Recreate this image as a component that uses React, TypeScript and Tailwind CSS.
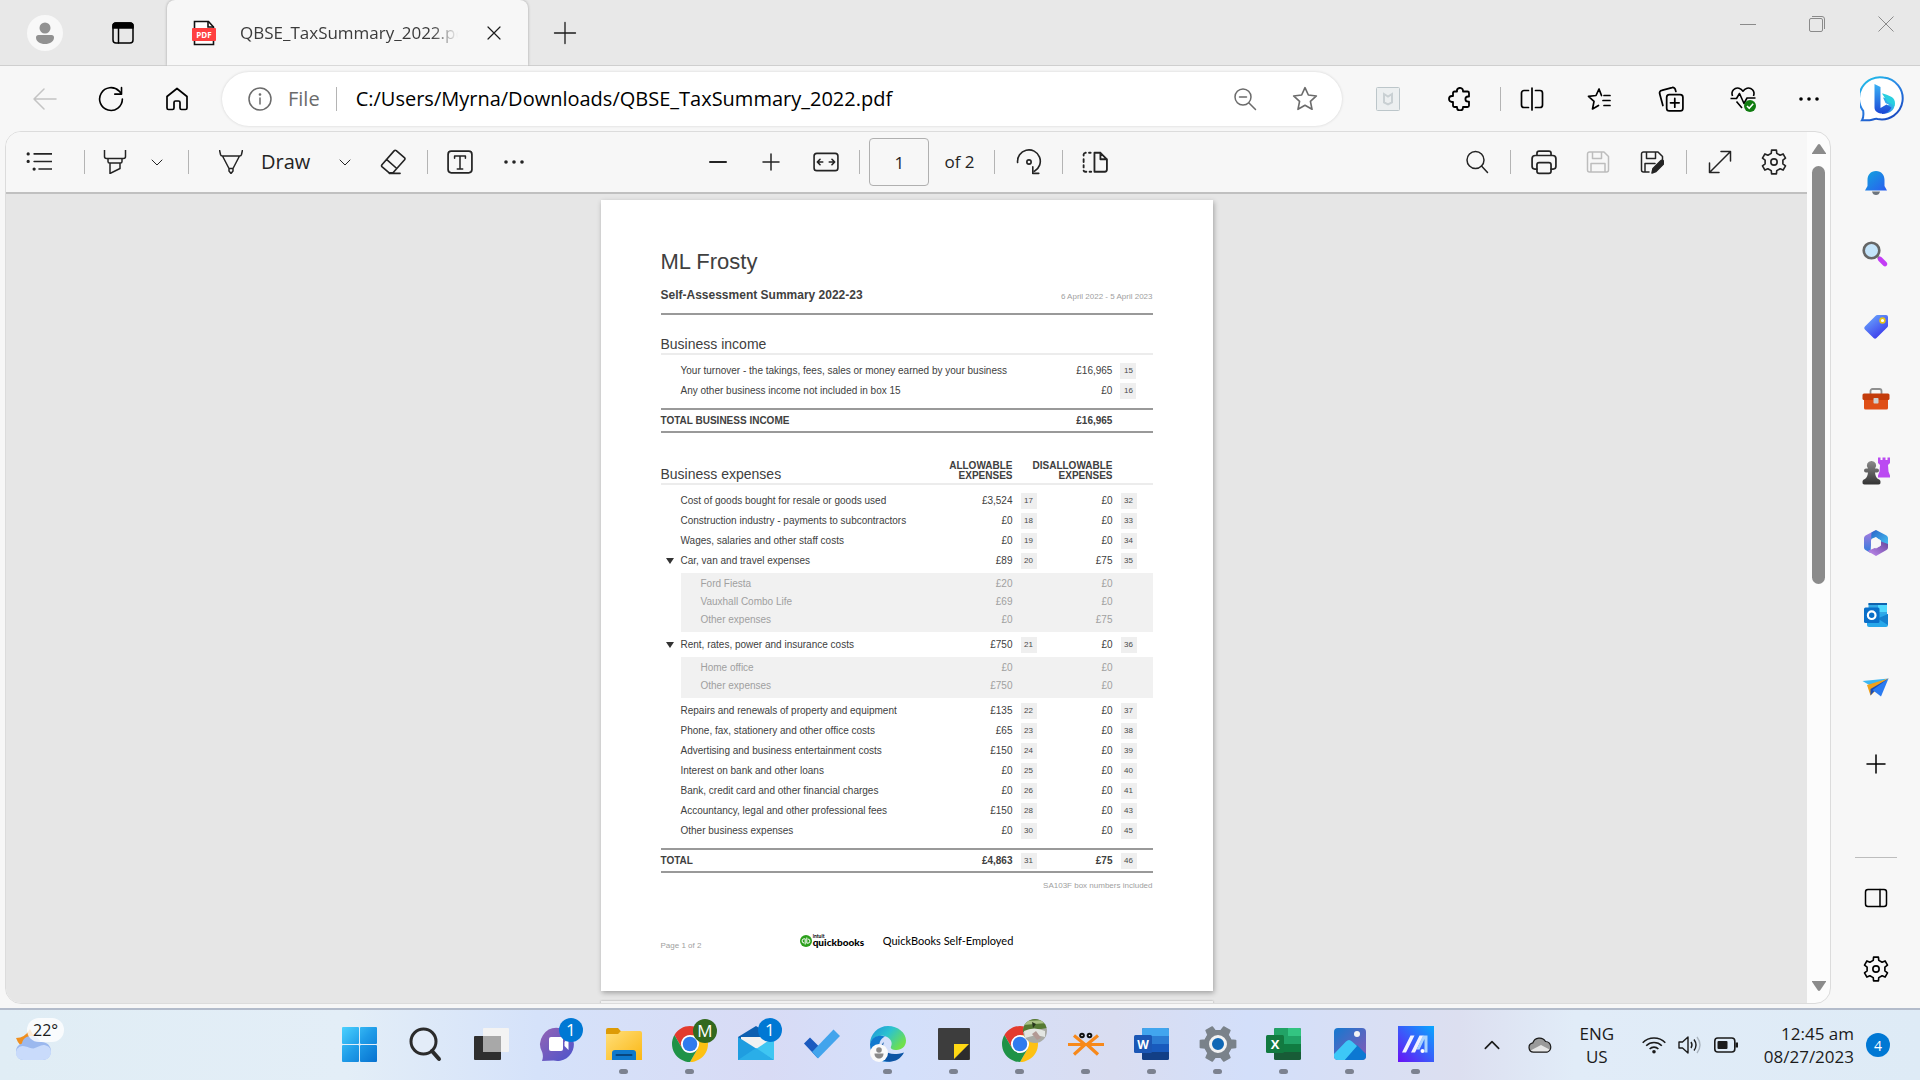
import type { ReactNode } from 'react';

type Row = {
  label: string;
  allow?: string;
  allowBox?: string;
  disallow: string;
  disallowBox?: string;
  children?: Row[];
};

const expenses: Row[] = [
  { label: 'Cost of goods bought for resale or goods used', allow: '£3,524', allowBox: '17', disallow: '£0', disallowBox: '32' },
  { label: 'Construction industry - payments to subcontractors', allow: '£0', allowBox: '18', disallow: '£0', disallowBox: '33' },
  { label: 'Wages, salaries and other staff costs', allow: '£0', allowBox: '19', disallow: '£0', disallowBox: '34' },
  {
    label: 'Car, van and travel expenses',
    allow: '£89',
    allowBox: '20',
    disallow: '£75',
    disallowBox: '35',
    children: [
      { label: 'Ford Fiesta', allow: '£20', disallow: '£0' },
      { label: 'Vauxhall Combo Life', allow: '£69', disallow: '£0' },
      { label: 'Other expenses', allow: '£0', disallow: '£75' },
    ],
  },
  {
    label: 'Rent, rates, power and insurance costs',
    allow: '£750',
    allowBox: '21',
    disallow: '£0',
    disallowBox: '36',
    children: [
      { label: 'Home office', allow: '£0', disallow: '£0' },
      { label: 'Other expenses', allow: '£750', disallow: '£0' },
    ],
  },
  { label: 'Repairs and renewals of property and equipment', allow: '£135', allowBox: '22', disallow: '£0', disallowBox: '37' },
  { label: 'Phone, fax, stationery and other office costs', allow: '£65', allowBox: '23', disallow: '£0', disallowBox: '38' },
  { label: 'Advertising and business entertainment costs', allow: '£150', allowBox: '24', disallow: '£0', disallowBox: '39' },
  { label: 'Interest on bank and other loans', allow: '£0', allowBox: '25', disallow: '£0', disallowBox: '40' },
  { label: 'Bank, credit card and other financial charges', allow: '£0', allowBox: '26', disallow: '£0', disallowBox: '41' },
  { label: 'Accountancy, legal and other professional fees', allow: '£150', allowBox: '28', disallow: '£0', disallowBox: '43' },
  { label: 'Other business expenses', allow: '£0', allowBox: '30', disallow: '£0', disallowBox: '45' },
];

const income: Row[] = [
  { label: 'Your turnover - the takings, fees, sales or money earned by your business', disallow: '£16,965', disallowBox: '15' },
  { label: 'Any other business income not included in box 15', disallow: '£0', disallowBox: '16' },
];

// six-toothed cog centred on (c, c)
function gearPath(c: number, outer: number, inner: number) {
  const points: string[] = [];
  for (let i = 0; i < 6; i++) {
    const base = (i * 60 - 90) * (Math.PI / 180);
    const steps: [number, number][] = [
      [-0.31, inner],
      [-0.2, outer],
      [0.2, outer],
      [0.31, inner],
    ];
    for (const [a, r] of steps) {
      points.push(`${(c + r * Math.cos(base + a)).toFixed(2)} ${(c + r * Math.sin(base + a)).toFixed(2)}`);
    }
  }
  return `M${points.join('L')}Z`;
}

function Icon({ children, className = 'w-6 h-6', sw = 1.5 }: { children: ReactNode; className?: string; sw?: number }) {
  return (
    <svg
      viewBox="0 0 24 24"
      className={className}
      fill="none"
      stroke="currentColor"
      strokeWidth={sw}
      strokeLinecap="round"
      strokeLinejoin="round"
      aria-hidden
    >
      {children}
    </svg>
  );
}

function IconButton({ label, className = '', children }: { label: string; className?: string; children: ReactNode }) {
  return (
    <button aria-label={label} className={`flex h-10 w-10 shrink-0 items-center justify-center ${className}`}>
      {children}
    </button>
  );
}

function Sep({ className = '' }: { className?: string }) {
  return <span className={`h-6 w-px shrink-0 bg-[#b4b4b4] ${className}`} />;
}

const Chevron = () => (
  <Icon className="w-3 h-3" sw={2}>
    <path d="M2 8l10 10L22 8" />
  </Icon>
);

const Dots = () => (
  <Icon>
    <g fill="currentColor" stroke="none">
      <circle cx="4" cy="12" r="1.8" />
      <circle cx="12" cy="12" r="1.8" />
      <circle cx="20" cy="12" r="1.8" />
    </g>
  </Icon>
);

const Gear = () => (
  <Icon className="w-7 h-7" sw={1.4}>
    <path d={gearPath(12, 10.4, 7.8)} />
    <circle cx="12" cy="12" r="2.7" />
  </Icon>
);

/* ---------- tab strip ---------- */

function TabStrip() {
  return (
    <header className="flex h-[66px] items-center border-b border-[#cfcfcf] bg-[#e8e8e8] text-[#1b1b1b]">
      <button aria-label="Profile" className="ml-[27px] flex h-9 w-9 items-center justify-center rounded-full bg-[#f8f8f8]">
        <svg viewBox="0 0 24 24" className="w-6 h-6" fill="#919191" aria-hidden>
          <circle cx="12" cy="7" r="5.5" />
          <path d="M5.5 14h13a2.5 2.5 0 0 1 2.500 2.500c0 4-4 6.500-9 6.500s-9-2.500-9-6.500A2.500 2.500 0 0 1 5.500 14z" />
        </svg>
      </button>
      <IconButton label="Tab actions" className="ml-10 text-black">
        <Icon>
          <rect x="2" y="2" width="20" height="20" rx="3" />
          <path d="M2 7V5a3 3 0 0 1 3-3h14a3 3 0 0 1 3 3v2z" fill="currentColor" />
          <path d="M7.500 7v15" />
        </Icon>
      </IconButton>
      <div className="ml-6 flex h-[66px] w-[361px] shrink-0 items-center rounded-t-lg bg-[#f7f7f7] pl-[25px] shadow-[0_0_3px_rgba(0,0,0,0.3)] [clip-path:inset(0_-4px_0_-4px)]">
        <svg viewBox="0 0 24 26" className="h-[26px] w-6 shrink-0" aria-hidden>
          <path d="M2.500 1.500h14l5 5.500v17.500h-19z" fill="#fff" stroke="#111" strokeWidth="1.600" />
          <path d="M16 1.500V7h5.500" fill="none" stroke="#111" strokeWidth="1.600" />
          <rect x="0" y="8" width="24" height="13" rx="1" fill="#ff4040" />
          <text x="12" y="17.500" textAnchor="middle" fill="#fff" fontFamily="Open Sans, sans-serif" fontWeight="700" fontSize="8">
            PDF
          </text>
        </svg>
        <span className="ml-6 w-[218px] overflow-hidden whitespace-nowrap text-[17px] leading-7 text-[#3b3b3b] [mask-image:linear-gradient(to_right,black_88%,transparent)]">
          QBSE_TaxSummary_2022.pdf
        </span>
        <IconButton label="Close tab" className="ml-4">
          <Icon className="w-4 h-4" sw={1.800}>
            <path d="M3 3l18 18M21 3L3 21" />
          </Icon>
        </IconButton>
      </div>
      <IconButton label="New tab" className="ml-[17px]">
        <Icon sw={1.300}>
          <path d="M12 1.500v21M1.500 12h21" />
        </Icon>
      </IconButton>
      <div className="ml-auto flex self-start text-[#8a8a8a]">
        <button aria-label="Minimize" className="flex h-[47px] w-[69px] items-center justify-center">
          <svg viewBox="0 0 16 16" className="w-4 h-4" stroke="currentColor" aria-hidden>
            <path d="M0 8.500h16" />
          </svg>
        </button>
        <button aria-label="Restore" className="flex h-[47px] w-[69px] items-center justify-center">
          <svg viewBox="0 0 16 16" className="w-4 h-4" stroke="currentColor" fill="none" aria-hidden>
            <rect x=".5" y="2.500" width="13" height="13" rx="1.500" />
            <path d="M3 .5h10a2.500 2.500 0 0 1 2.500 2.500v10" />
          </svg>
        </button>
        <button aria-label="Close window" className="flex h-[47px] w-[69px] items-center justify-center">
          <svg viewBox="0 0 16 16" className="w-4 h-4" stroke="currentColor" aria-hidden>
            <path d="M.5.5l15 15M15.500.5l-15 15" />
          </svg>
        </button>
      </div>
    </header>
  );
}

/* ---------- address bar ---------- */

function BingLogo() {
  return (
    <svg viewBox="0 0 46 46" className="h-[46px] w-[46px]" aria-hidden>
      <defs>
        <linearGradient id="bingRing" x1="0" y1="0" x2=".6" y2="1">
          <stop offset="0" stopColor="#1fc8e8" />
          <stop offset=".5" stopColor="#2a86e6" />
          <stop offset="1" stopColor="#1b4fc4" />
        </linearGradient>
        <linearGradient id="bingStem" x1="0" y1="0" x2="0" y2="1">
          <stop offset="0" stopColor="#3bb2f5" />
          <stop offset="1" stopColor="#1c48d6" />
        </linearGradient>
        <linearGradient id="bingBowl" x1="1" y1="0" x2="0" y2="1">
          <stop offset="0" stopColor="#27dcd2" />
          <stop offset=".5" stopColor="#35a5ee" />
          <stop offset="1" stopColor="#1b46d2" />
        </linearGradient>
      </defs>
      <path
        d="M23.500 1.500a21 21 0 1 1-6 41.500c-3-.8-5 1.300-8 1.300H2c2-3 1.500-6 1.200-9.500A21 21 0 0 1 23.500 1.500z"
        fill="#fff"
        stroke="url(#bingRing)"
        strokeWidth="2"
      />
      <path d="M23 21.500l2.500 5.500 3.500 1.700-7 4.300v5c7 0 12.500-3.500 12.500-9 0-4-2.500-5.500-6-6.500z" fill="url(#bingBowl)" />
      <path d="M14.500 8l6 3v21l6-3.500 5 3c-2 4-5.500 6-9 6-4 0-8-2-8-6z" fill="url(#bingStem)" />
      <path d="M22 17.500c1 0 8 2 11 4.500 2 2 2.500 5 1.500 8.500-1-2.500-4-3-7-4.500z" fill="#29cfe0" />
    </svg>
  );
}

function AddressBar() {
  return (
    <nav className="flex h-[65px] items-center bg-[#f7f7f7] pr-[14px] pl-[25px] text-black">
      <IconButton label="Back" className="text-[#c4c4c4]">
        <Icon className="h-6 w-6" sw={1.500}>
          <path d="M23 12H1M11 2L1 12l10 10" />
        </Icon>
      </IconButton>
      <IconButton label="Refresh" className="ml-[26px]">
        <Icon className="h-[26px] w-[26px]">
          <path d="M22.500 12A10.500 10.500 0 1 1 19.500 4.700L21.500 7M21.700 1.500V7.500H15.500" />
        </Icon>
      </IconButton>
      <IconButton label="Home" className="ml-[26px]">
        <Icon sw={1.700}>
          <path d="M2 9.500L12 1.500l10 8V21a1.500 1.500 0 0 1-1.500 1.500h-4A1.500 1.500 0 0 1 15 21v-5.500a1.500 1.500 0 0 0-1.500-1.500h-3A1.500 1.500 0 0 0 9 15.500V21a1.500 1.500 0 0 1-1.500 1.500h-4A1.500 1.500 0 0 1 2 21z" />
        </Icon>
      </IconButton>
      <div className="ml-[25px] flex h-[54px] flex-1 items-center rounded-full bg-white pr-[17px] pl-[26px] shadow-[0_0_3px_rgba(0,0,0,0.15)]">
        <Icon className="h-6 w-6 text-[#6b6b6b]">
          <circle cx="12" cy="12" r="11" />
          <path d="M12 11v6" />
          <circle cx="12" cy="7.500" r=".6" fill="currentColor" />
        </Icon>
        <label htmlFor="address" className="ml-4 text-[20px] leading-7 text-[#6b6b6b]">
          File
        </label>
        <Sep className="ml-4 bg-[#8c8c8c]" />
        <input
          id="address"
          defaultValue="C:/Users/Myrna/Downloads/QBSE_TaxSummary_2022.pdf"
          className="ml-[19px] min-w-0 flex-1 bg-transparent text-[20px] leading-7 outline-none"
        />
        <IconButton label="Zoom out" className="text-[#6b6b6b]">
          <Icon>
            <circle cx="10" cy="10" r="8" />
            <path d="M16 16l6.500 6.500M6.500 10h7" />
          </Icon>
        </IconButton>
        <IconButton label="Add to favorites" className="ml-5 text-[#6b6b6b]">
          <Icon className="h-[26px] w-[26px]">
            <path d="M12 1.500l3.100 6.800 7.400.9-5.500 5 1.500 7.300-6.500-3.700-6.500 3.700L7 14.200l-5.500-5 7.400-.9z" />
          </Icon>
        </IconButton>
      </div>
      <IconButton label="McAfee WebAdvisor" className="ml-[26px]">
        <svg viewBox="0 0 24 24" className="h-6 w-6" aria-hidden>
          <rect x=".5" y=".5" width="23" height="23" rx="1" fill="#eceff0" stroke="#bcc6ca" />
          <path d="M8 7l4 2.500L16 7v8.500L12 17.500 8 15.500z" fill="none" stroke="#c9d0d3" strokeWidth="2" />
        </svg>
      </IconButton>
      <IconButton label="Extensions" className="ml-8">
        <Icon sw={1.800}>
          <path d="M9 4.500a3 3 0 0 1 6-1v1h4.500A1.500 1.500 0 0 1 21 6v3.500h-1a2.600 2.600 0 0 0 0 5.200h1V18.500a1.500 1.500 0 0 1-1.500 1.500H15v.5a3 3 0 0 1-6 0V20H6.500A1.500 1.500 0 0 1 5 18.500V15H4a3 3 0 0 1 0-6h1V6a1.500 1.500 0 0 1 1.500-1.500z" />
        </Icon>
      </IconButton>
      <Sep className="ml-5" />
      <IconButton label="Split screen" className="ml-[11px]">
        <Icon sw={1.700}>
          <path d="M12 1v22M8.500 3.500H4A2.500 2.500 0 0 0 1.500 6v12A2.500 2.500 0 0 0 4 20.500h4.500M15.500 3.500H20A2.500 2.500 0 0 1 22.500 6v12a2.500 2.500 0 0 1-2.500 2.500h-4.500" />
        </Icon>
      </IconButton>
      <IconButton label="Favorites" className="ml-[27px]">
        <Icon sw={1.700}>
          <path d="M17 8.500h6M16 13.500h7M17 18.500h6M14.500 8.500L12 2 9 8.500l-7.500.8 5.500 5L5.500 22l6-3.500" />
        </Icon>
      </IconButton>
      <IconButton label="Collections" className="ml-8">
        <Icon className="h-[26px] w-[26px]" sw={1.600}>
          <rect x="8" y="8" width="15" height="15" rx="2.500" />
          <path d="M15.500 11.500v8M11.500 15.500h8M4.500 18L1.500 7a2.500 2.500 0 0 1 2-3L13 1.500a2.300 2.300 0 0 1 3 2L16.500 5" />
        </Icon>
      </IconButton>
      <IconButton label="Browser essentials" className="ml-8">
        <svg viewBox="0 0 26 26" className="h-[26px] w-[26px]" fill="none" stroke="currentColor" strokeWidth="1.600" strokeLinejoin="round" aria-hidden>
          <path d="M2.500 10C.5 5 5 1 9 2.200c1.800.5 3 1.500 4 3 1-1.500 2.200-2.500 4-3 4-1.200 8.500 2.800 6.500 7.800M6.500 15.500L12 22" />
          <path d="M.5 12.500h6l3-5 4.500 10 3-5.500h8.500" />
          <circle cx="20" cy="20" r="6" fill="#107c10" stroke="none" />
          <path d="M17 20l2.200 2.300 4-4.500" stroke="#fff" />
        </svg>
      </IconButton>
      <IconButton label="Settings and more" className="ml-[26px]">
        <Dots />
      </IconButton>
      <button aria-label="Bing Chat" className="ml-[31px] shrink-0">
        <BingLogo />
      </button>
    </nav>
  );
}

/* ---------- pdf viewer ---------- */

function PdfToolbar() {
  return (
    <div className="grid h-[62px] grid-cols-[1fr_auto_1fr] items-center border-b-2 border-[#c0c0c0] bg-[#f7f7f7] text-[#242424]">
      <div className="flex items-center pl-[13px]">
        <IconButton label="Table of contents">
          <Icon className="h-[26px] w-[26px]">
            <path d="M7.500 4.500H24M7.500 11.500H24M12 18.500h12" />
            <path d="M2 4.500h.01M2 11.500h.01M7.500 18.500h.01" strokeWidth="3" />
          </Icon>
        </IconButton>
        <Sep className="ml-[25px]" />
        <IconButton label="Highlight" className="ml-[10px]">
          <Icon>
            <path d="M1.500 0v6.500A2 2 0 0 0 3.500 8.500h17a2 2 0 0 0 2-2V0M5 8.500v3A1.500 1.500 0 0 0 6.500 13h11a1.500 1.500 0 0 0 1.500-1.500v-3M7 13v10.500l10-5V13" />
          </Icon>
        </IconButton>
        <IconButton label="Highlight options" className="-mr-1 ml-[2px]">
          <Chevron />
        </IconButton>
        <Sep className="ml-[15px]" />
        <button className="ml-[30px] flex items-center gap-[18px] text-[20px] leading-7">
          <Icon>
            <path d="M.5 0l1 4.500A2 2 0 0 0 3.500 6h17a2 2 0 0 0 2-1.500l1-4.500M3.500 6L10 18.500h4L20.500 6M10 18.500V21l2 2.500 2-2.500v-2.500" />
          </Icon>
          Draw
        </button>
        <IconButton label="Draw options" className="ml-[15px]">
          <Chevron />
        </IconButton>
        <IconButton label="Erase" className="ml-2">
          <Icon className="h-[26px] w-[26px]">
            <path d="M15 1.500l7.500 6.500a1.500 1.500 0 0 1 .2 2L12 22H8.500L2 16.500a1.500 1.500 0 0 1-.2-2L13 1.700a1.500 1.500 0 0 1 2-.2zM6 9.500l9.500 8.500M8.500 22.500h10" />
          </Icon>
        </IconButton>
        <Sep className="ml-[14px]" />
        <IconButton label="Add text" className="ml-3">
          <Icon className="h-[26px] w-[26px]" sw={1.600}>
            <rect x="1" y="2" width="22" height="20" rx="3" />
            <path d="M7 8.500V6.500h10v2M12 6.500v12M9.500 18.500h5" strokeWidth="1.400" />
          </Icon>
        </IconButton>
        <IconButton label="More tools" className="ml-[14px]">
          <Dots />
        </IconButton>
      </div>
      <div className="flex items-center">
        <IconButton label="Zoom out page">
          <Icon>
            <path d="M4 12h16" strokeWidth="2" />
          </Icon>
        </IconButton>
        <IconButton label="Zoom in page" className="ml-[13px]">
          <Icon>
            <path d="M12 4v16M4 12h16" />
          </Icon>
        </IconButton>
        <IconButton label="Fit to width" className="ml-[15px]">
          <Icon className="h-[26px] w-[26px]">
            <rect x="1" y="4" width="22" height="16" rx="2.500" />
            <path d="M4.500 12H9M15 12h4.500M6.500 9.500L4 12l2.500 2.500M17.500 9.500L20 12l-2.500 2.500" />
          </Icon>
        </IconButton>
        <Sep className="ml-[13px]" />
        <input
          aria-label="Page number"
          defaultValue="1"
          className="ml-[9px] h-12 w-[60px] rounded-sm border border-[#b0b0b0] bg-transparent text-center text-[17px] outline-none"
        />
        <span className="ml-[15px] text-[17px] leading-7">of 2</span>
        <Sep className="ml-[19px]" />
        <IconButton label="Rotate" className="ml-[14px]">
          <Icon className="h-[26px] w-[26px]">
            <path d="M1.500 12.500A10.500 10.500 0 1 1 17 20.500M15.500 16.500v6h5.500" />
            <circle cx="12" cy="12" r="2" />
          </Icon>
        </IconButton>
        <Sep className="ml-[13px]" />
        <IconButton label="Page view" className="ml-3">
          <Icon className="h-[26px] w-[26px]" sw={1.700}>
            <path d="M11.500 3.500h5.500L23 9.500V19a2 2 0 0 1-2 2h-9.500zM17 3.500v6h6" />
            <path d="M8 3.500H6.500M3.500 3.500H3A2 2 0 0 0 1.500 5v1M1.500 9.500v2.500M1.500 15v2M1.500 20a1.500 1.500 0 0 0 1.500 1h1M7 21h1.500" />
          </Icon>
        </IconButton>
      </div>
      <div className="flex items-center justify-end pr-[13px]">
        <IconButton label="Find">
          <Icon>
            <circle cx="10.500" cy="10" r="8.500" />
            <path d="M16.500 16l6 6.500" />
          </Icon>
        </IconButton>
        <Sep className="ml-[13px]" />
        <IconButton label="Print" className="ml-[13px]">
          <Icon className="h-[26px] w-[26px]" sw={1.600}>
            <path d="M5.500 18.500H3.500a2.500 2.500 0 0 1-2.500-2.500V9a3 3 0 0 1 3-3h16a3 3 0 0 1 3 3v7a2.500 2.500 0 0 1-2.500 2.500h-2M5.500 6V4a2 2 0 0 1 2-2h9a2 2 0 0 1 2 2v2" />
            <rect x="5.500" y="12.500" width="13" height="10" rx="2" />
          </Icon>
        </IconButton>
        <IconButton label="Save" className="ml-[14px] text-[#bdbdbd]">
          <Icon>
            <path d="M1.500 4a2 2 0 0 1 2-2H18l4.500 4.500V20a2 2 0 0 1-2 2h-17a2 2 0 0 1-2-2zM6.500 2v6.500h9V2M5 22v-8.500h14V22" />
          </Icon>
        </IconButton>
        <IconButton label="Save as" className="ml-[14px]">
          <Icon>
            <path d="M9 22H3.500a2 2 0 0 1-2-2V4a2 2 0 0 1 2-2H18l4.500 4.500v4M6.500 2v6.500h9V2M5 22v-8.500h10" />
            <path d="M12 23l1-4.500 7.500-7.500a2 2 0 0 1 3 3L16 21.500z" fill="currentColor" />
          </Icon>
        </IconButton>
        <Sep className="ml-[14px]" />
        <IconButton label="Full screen" className="ml-[13px]">
          <Icon>
            <path d="M13 1.500h9.500V11M1.500 13v9.500H11M22.500 1.500l-21 21" />
          </Icon>
        </IconButton>
        <IconButton label="Viewer settings" className="ml-[14px]">
          <Gear />
        </IconButton>
      </div>
    </div>
  );
}

function BoxNumber({ value }: { value?: string }) {
  return (
    <td className="pl-2">
      {value && (
        <span className="flex h-4 w-4 items-center justify-center bg-[#efefef] text-[8px] font-normal text-[#4a4a4a]">{value}</span>
      )}
    </td>
  );
}

function Spacer({ className }: { className: string }) {
  return (
    <tr aria-hidden>
      <td colSpan={6} className={className} />
    </tr>
  );
}

function ShadeEdge({ className }: { className: string }) {
  return (
    <tr aria-hidden>
      <td />
      <td colSpan={5} className={`bg-[#f1f1f1] ${className}`} />
    </tr>
  );
}

function Columns() {
  return (
    <colgroup>
      <col className="w-5" />
      <col />
      <col className="w-20" />
      <col className="w-10" />
      <col className="w-[60px]" />
      <col className="w-10" />
    </colgroup>
  );
}

function LineItem({ row }: { row: Row }) {
  return (
    <>
      <tr className="h-5">
        <td>
          {row.children && (
            <svg viewBox="0 0 8 6" className="ml-[5px] h-[6px] w-2" aria-hidden>
              <path d="M0 0h8L4 6z" fill="#333" />
            </svg>
          )}
        </td>
        <td className="whitespace-nowrap">{row.label}</td>
        <td className="text-right">{row.allow}</td>
        <BoxNumber value={row.allowBox} />
        <td className="text-right">{row.disallow}</td>
        <BoxNumber value={row.disallowBox} />
      </tr>
      {row.children && (
        <>
          <Spacer className="h-[2px]" />
          <ShadeEdge className="h-[2px]" />
          {row.children.map((child) => (
            <tr key={child.label} className="h-[18px] text-[#a0a0a0]">
              <td />
              <td className="bg-[#f1f1f1] pl-5">{child.label}</td>
              <td className="bg-[#f1f1f1] text-right">{child.allow}</td>
              <td className="bg-[#f1f1f1]" />
              <td className="bg-[#f1f1f1] text-right">{child.disallow}</td>
              <td className="bg-[#f1f1f1]" />
            </tr>
          ))}
          <ShadeEdge className="h-[3px]" />
          <Spacer className="h-[3px]" />
        </>
      )}
    </>
  );
}

function PdfPage() {
  return (
    <article className="mx-auto w-[612px] bg-white px-[60px] pt-12 pb-10 font-['Liberation_Sans',Arial,sans-serif] text-[10px] leading-4 text-[#404040] shadow-[1px_2px_5px_rgba(0,0,0,0.3)]">
      <h1 className="text-[22px] leading-7">ML Frosty</h1>
      <div className="mt-[9px] flex items-end justify-between border-b-2 border-[#999] pb-2">
        <h2 className="text-[12px] leading-5 font-bold">Self-Assessment Summary 2022-23</h2>
        <span className="text-[8px] leading-4 text-[#a0a0a0]">6 April 2022 - 5 April 2023</span>
      </div>

      <table className="mt-5 w-full table-fixed">
        <Columns />
        <thead>
          <tr className="border-b-2 border-[#ececec]">
            <th colSpan={6} className="text-left text-[14px] leading-[18px] font-normal">
              Business income
            </th>
          </tr>
        </thead>
        <tbody>
          <Spacer className="h-[7px]" />
          {income.map((row) => (
            <LineItem key={row.label} row={row} />
          ))}
          <Spacer className="h-2" />
        </tbody>
        <tfoot>
          <tr className="h-[23px] border-y-2 border-[#999] font-bold">
            <td colSpan={4}>TOTAL BUSINESS INCOME</td>
            <td className="text-right">£16,965</td>
            <td />
          </tr>
        </tfoot>
      </table>

      <table className="mt-7 w-full table-fixed">
        <Columns />
        <thead>
          <tr className="border-b-2 border-[#ececec] align-bottom">
            <th colSpan={2} className="text-left text-[14px] leading-[18px] font-normal">
              Business expenses
            </th>
            <th className="pb-[2px] text-right leading-[10px]">
              ALLOWABLE
              <br />
              EXPENSES
            </th>
            <th colSpan={2} className="pb-[2px] text-right leading-[10px]">
              DISALLOWABLE
              <br />
              EXPENSES
            </th>
            <th />
          </tr>
        </thead>
        <tbody>
          <Spacer className="h-[7px]" />
          {expenses.map((row) => (
            <LineItem key={row.label} row={row} />
          ))}
          <Spacer className="h-2" />
        </tbody>
        <tfoot>
          <tr className="h-[23px] border-y-2 border-[#999] font-bold">
            <td colSpan={2}>TOTAL</td>
            <td className="text-right">£4,863</td>
            <BoxNumber value="31" />
            <td className="text-right">£75</td>
            <BoxNumber value="46" />
          </tr>
        </tfoot>
      </table>

      <p className="mt-[7px] text-right text-[8px] leading-3 text-[#a0a0a0]">SA103F box numbers included</p>

      <footer className="mt-[39px] grid h-5 grid-cols-[1fr_auto_1fr] items-center text-black">
        <span className="self-end text-[8px] leading-[10px] text-[#a0a0a0]">Page 1 of 2</span>
        <div className="flex items-center font-['Lato',sans-serif] text-[11px] leading-4">
          <svg viewBox="0 0 12 12" className="h-3 w-3" aria-hidden>
            <circle cx="6" cy="6" r="6" fill="#2ca01c" />
            <g fill="none" stroke="#fff" strokeWidth="1">
              <path d="M5.200 3.800H4.200a2.100 2.100 0 0 0 0 4.200M5.200 3.800v5.700" />
              <path d="M6.800 8.200h1a2.100 2.100 0 0 0 0-4.200M6.800 8.200V2.500" />
            </g>
          </svg>
          <span className="ml-px flex w-[70px] flex-col text-[10px] leading-[10px] font-black">
            <span className="h-[2px] text-[5px] leading-[2px] font-bold">intuit</span>
            quickbooks
          </span>
          QuickBooks Self-Employed
        </div>
      </footer>
    </article>
  );
}

function PdfViewer() {
  return (
    <main className="mb-1 ml-[5px] flex min-h-0 min-w-0 flex-1 overflow-hidden rounded-2xl border border-[#dcdcdc] bg-[#fcfcfc]">
      <div className="flex min-w-0 flex-1 flex-col">
        <PdfToolbar />
        <div className="min-h-0 flex-1 overflow-hidden bg-[#e6e6e6] pt-[6px]">
          <PdfPage />
          <div className="mx-auto mt-[10px] h-4 w-[612px] bg-[#f0f0f0] shadow-[0_0_2px_rgba(0,0,0,0.3)]" />
        </div>
      </div>
      <div className="flex w-[23px] flex-col items-center py-3 text-[#8b8b8b]">
        <svg viewBox="0 0 14 10" className="h-[10px] w-[14px]" fill="currentColor" aria-hidden>
          <path d="M5.800.8a1.500 1.500 0 0 1 2.400 0L14 9.200V10H0v-.8z" />
        </svg>
        <div className="mt-3 h-[418px] w-[13px] rounded-full bg-[#8b8b8b]" />
        <svg viewBox="0 0 14 10" className="mt-auto h-[10px] w-[14px]" fill="currentColor" aria-hidden>
          <path d="M5.800 9.200a1.500 1.500 0 0 0 2.400 0L14 .8V0H0v.8z" />
        </svg>
      </div>
    </main>
  );
}

/* ---------- side bar ---------- */

const sideIcons: { label: string; art: ReactNode }[] = [
  {
    label: 'Notifications',
    art: (
      <>
        <defs>
          <linearGradient id="bell" x1="0" y1="0" x2="1" y2="1">
            <stop offset="0" stopColor="#12a5dd" />
            <stop offset="1" stopColor="#2b5cf0" />
          </linearGradient>
        </defs>
        <path d="M14 2c5.500 0 8.500 4 8.500 9v6l2.500 4.500H3L5.500 17v-6c0-5 3-9 8.500-9z" fill="url(#bell)" />
        <path d="M10 22.500h8c-.5 2.500-2 3.500-4 3.500s-3.500-1-4-3.500z" fill="#6d747c" />
      </>
    ),
  },
  {
    label: 'Search',
    art: (
      <>
        <path d="M16 16l3 3" stroke="#666" strokeWidth="2.500" />
        <path d="M18 18l5 5" stroke="#c33df5" strokeWidth="4.600" strokeLinecap="round" />
        <circle cx="9.500" cy="9.500" r="7.800" fill="#c4e4fa" stroke="#666" strokeWidth="2.600" />
      </>
    ),
  },
  {
    label: 'Shopping',
    art: (
      <>
        <defs>
          <linearGradient id="tag" x1="0" y1="0" x2=".7" y2="1">
            <stop offset="0" stopColor="#6fb4ff" />
            <stop offset="1" stopColor="#3a35ea" />
          </linearGradient>
        </defs>
        <path d="M15.500 2H24a2 2 0 0 1 2 2v8.500a3 3 0 0 1-.9 2.100L14.500 25.100a2 2 0 0 1-2.900 0L2.900 16.400a2 2 0 0 1 0-2.900L13.400 2.900a3 3 0 0 1 2.100-.9z" fill="url(#tag)" />
        <circle cx="20.500" cy="7.500" r="2.400" fill="#fff" stroke="#e8c416" strokeWidth="1.600" />
      </>
    ),
  },
  {
    label: 'Tools',
    art: (
      <>
        <path d="M8.500 9V6A2 2 0 0 1 10.500 4h7a2 2 0 0 1 2 2v3" fill="none" stroke="#8f8f8f" strokeWidth="1.800" />
        <rect x="2" y="12" width="24" height="12.500" rx="1.500" fill="#df4f16" />
        <rect x=".5" y="8.500" width="27" height="6.500" rx="1.500" fill="#c43c0b" />
        <rect x="11.500" y="13" width="5" height="5.500" rx=".8" fill="#cfcfcf" />
      </>
    ),
  },
  {
    label: 'Games',
    art: (
      <>
        <defs>
          <linearGradient id="pawn" x1="0" y1="0" x2="0" y2="1">
            <stop offset="0" stopColor="#8b8b8b" />
            <stop offset="1" stopColor="#333" />
          </linearGradient>
        </defs>
        <path d="M16 .5h2.500V3h2V.5h3V3h2V.5H28V6l-2 2 .500 6.500 1.500 4v2H16v-2l1.500-4L18 8l-2-2z" fill="#bb4af2" />
        <path d="M9.500 4a4.500 4.500 0 0 1 3.500 7.500h2a1.500 1.500 0 0 1 0 4h-2c.3 3 1 5 3 6.500 2 .5 2.500 1.500 2.500 3 0 1.800-.5 2.500-2 2.500h-14C1 27.500.500 26.800.500 25c0-1.500.5-2.500 2.500-3 2-1.500 2.700-3.500 3-6.500H4a1.500 1.500 0 0 1 0-4h2A4.500 4.500 0 0 1 9.500 4z" fill="url(#pawn)" />
      </>
    ),
  },
  {
    label: 'Microsoft 365',
    art: (
      <>
        <defs>
          <linearGradient id="m365a" x1="0" y1="0" x2="0" y2="1">
            <stop offset="0" stopColor="#b07ae0" />
            <stop offset="1" stopColor="#2d7ddc" />
          </linearGradient>
          <linearGradient id="m365b" x1="0" y1="0" x2="1" y2="1">
            <stop offset="0" stopColor="#2a62c8" />
            <stop offset="1" stopColor="#45c6f4" />
          </linearGradient>
          <linearGradient id="m365c" x1="0" y1="1" x2="1" y2="0">
            <stop offset="0" stopColor="#c48cf0" />
            <stop offset="1" stopColor="#66469e" />
          </linearGradient>
        </defs>
        <path d="M14 1L3.500 6.500Q2 7.500 2 9v9.500q0 1.500 1.500 2.500l5 3 1-16z" fill="url(#m365a)" />
        <path d="M9.500 3.500L14 1l10.500 5.500Q26 7.500 26 9v8.500l-7-4.500-5-5-5 2z" fill="url(#m365b)" />
        <path d="M26 15v3.500q0 1.500-1.500 2.500L14 27 5.500 22l8.500-3.500 5-6z" fill="url(#m365c)" />
        <path d="M14 9l4.500 2.500v5L14 19l-4.500-2.500v-5z" fill="#f7f7f7" stroke="#f7f7f7" strokeLinejoin="round" />
      </>
    ),
  },
  {
    label: 'Outlook',
    art: (
      <>
        <rect x="6.500" y="2" width="18.500" height="20" rx="1" fill="#32a9e7" />
        <rect x="6.500" y="2" width="18.500" height="2" fill="#0f63af" />
        <rect x="16" y="4" width="9" height="7" fill="#50d9ff" />
        <path d="M5 13l21 0v11a2 2 0 0 1-2 2H7a2 2 0 0 1-2-2z" fill="#28a8ea" />
        <path d="M26 13v11L15.500 17.500z" fill="#1581cf" />
        <rect x="2" y="6.500" width="15.500" height="15.500" rx="1.500" fill="#0a6fc9" />
        <circle cx="9.700" cy="14.200" r="3.800" fill="none" stroke="#fff" strokeWidth="2.200" />
      </>
    ),
  },
  {
    label: 'Drop',
    art: (
      <>
        <path d="M.5 8L26.500 5.500 8 12.500z" fill="#3cb7f2" />
        <path d="M26.500 5.500L8.500 22.500 5 12z" fill="#f0a11a" />
        <path d="M26.500 5.500L8.500 16v6.500l3.500-4z" fill="#1b4db5" />
        <path d="M26.500 5.500L19 23.500 10.500 17z" fill="#2b7bf0" />
      </>
    ),
  },
];

function SideBar() {
  return (
    <aside className="flex w-[89px] shrink-0 flex-col items-center pt-4 pb-1 text-black">
      {sideIcons.map(({ label, art }) => (
        <button key={label} aria-label={label} className="flex h-[72px] w-full items-center justify-center">
          <svg viewBox="0 0 28 28" className="h-7 w-7" aria-hidden>
            {art}
          </svg>
        </button>
      ))}
      <button aria-label="Customize" className="mt-[5px] flex h-[72px] w-full items-center justify-center">
        <Icon sw={1.500}>
          <path d="M12 3v18M3 12h18" />
        </Icon>
      </button>
      <div className="mt-auto w-[42px] border-t border-[#bdbdbd] pt-1">
        <button aria-label="Toggle sidebar" className="flex h-[71px] w-full items-center justify-center">
          <Icon>
            <rect x="1.500" y="3.500" width="21" height="17" rx="2.500" />
            <path d="M16 3.500v17" />
          </Icon>
        </button>
        <button aria-label="Sidebar settings" className="flex h-[71px] w-full items-center justify-center">
          <Gear />
        </button>
      </div>
    </aside>
  );
}

/* ---------- task bar ---------- */

function Badge({ children, className }: { children: ReactNode; className: string }) {
  return (
    <span className={`absolute flex h-6 w-6 items-center justify-center rounded-full text-[17px] leading-6 text-white ${className}`}>
      {children}
    </span>
  );
}

const Chrome = () => (
  <svg viewBox="0 0 48 48" className="h-9 w-9" aria-hidden>
    <circle cx="24" cy="24" r="12" fill="#fff" />
    <path d="M24 12h20.780a24 24 0 0 0-41.560 0L13.600 30A12 12 0 0 1 24 12z" fill="#e33b2e" />
    <path d="M34.400 30L24 48a24 24 0 0 0 20.780-36H24a12 12 0 0 1 10.400 18z" fill="#fdc113" />
    <path d="M13.600 30L3.220 12A24 24 0 0 0 24 48l10.400-18a12 12 0 0 1-20.800 0z" fill="#1f9347" />
    <circle cx="24" cy="24" r="9.700" fill="#2f7bee" />
  </svg>
);

const Art = ({ children }: { children: ReactNode }) => (
  <svg viewBox="0 0 36 36" className="h-9 w-9 overflow-visible" aria-hidden>
    {children}
  </svg>
);

const taskIcons: { label: string; running?: boolean; art: ReactNode; badge?: ReactNode }[] = [
  {
    label: 'Start',
    art: (
      <Art>
        <defs>
          <linearGradient id="start" gradientUnits="userSpaceOnUse" x1="0" y1="0" x2="36" y2="36">
            <stop offset="0" stopColor="#4cd3ff" />
            <stop offset=".5" stopColor="#1f9ce8" />
            <stop offset="1" stopColor="#0670cf" />
          </linearGradient>
        </defs>
        <g fill="url(#start)">
          <rect x="0" y="1" width="17" height="17" rx="1" />
          <rect x="18" y="1" width="17" height="17" rx="1" />
          <rect x="0" y="19" width="17" height="17" rx="1" />
          <rect x="18" y="19" width="17" height="17" rx="1" />
        </g>
      </Art>
    ),
  },
  {
    label: 'Search',
    art: (
      <Art>
        <circle cx="15.500" cy="15.500" r="12.500" fill="#e3ecf8" stroke="#2b2b2b" strokeWidth="3" />
        <path d="M24 25l7 8" stroke="#2b2b2b" strokeWidth="4" strokeLinecap="round" />
      </Art>
    ),
  },
  {
    label: 'Task view',
    art: (
      <Art>
        <rect x="0" y="10" width="27" height="24" rx="1" fill="#2f2f2f" />
        <rect x="9" y="2" width="26" height="24" rx="1" fill="#f3f3f3" />
        <rect x="9" y="10" width="18" height="16" fill="#a8a8a8" />
      </Art>
    ),
  },
  {
    label: 'Chat',
    art: (
      <Art>
        <defs>
          <linearGradient id="chat" x1="0" y1="0" x2="1" y2="1">
            <stop offset="0" stopColor="#9463b4" />
            <stop offset="1" stopColor="#4c54cc" />
          </linearGradient>
        </defs>
        <path d="M18.500 2a16.500 16.500 0 1 1-5 32.500L2 35c1.500-4 .8-6 .3-8.500A16.500 16.500 0 0 1 18.500 2z" fill="url(#chat)" />
        <rect x="9" y="11" width="14" height="14" rx="2" fill="#fff" />
        <path d="M24.500 16l4-4v12l-4-4z" fill="#fff" />
      </Art>
    ),
    badge: <Badge className="top-[10px] left-[34px] bg-[#0078d4]">1</Badge>,
  },
  {
    label: 'File Explorer',
    running: true,
    art: (
      <Art>
        <defs>
          <linearGradient id="folder" x1="0" y1="0" x2="1" y2="1">
            <stop offset="0" stopColor="#ffdf7a" />
            <stop offset="1" stopColor="#fbb714" />
          </linearGradient>
        </defs>
        <path d="M0 4a2 2 0 0 1 2-2h10l4 4.500L12 12H0z" fill="#dd9b06" />
        <path d="M0 8h12l3-3h19a2 2 0 0 1 2 2v27H0z" fill="url(#folder)" />
        <path d="M6 34V27a3 3 0 0 1 3-3h18a3 3 0 0 1 3 3v7z" fill="#0f79cb" />
        <path d="M10.500 29h15" stroke="#08467d" strokeWidth="2" strokeLinecap="round" />
      </Art>
    ),
  },
  {
    label: 'Chrome',
    running: true,
    art: <Chrome />,
    badge: <Badge className="top-[11px] left-[36px] bg-[#33691e] text-[14px]">M</Badge>,
  },
  {
    label: 'Mail',
    art: (
      <Art>
        <path d="M0 11L18 0l18 11v10H0z" fill="#0d5fb0" />
        <path d="M3 11h30v12H3z" fill="#f2f2f2" />
        <path d="M0 11l36 23H0z" fill="#1f9de0" />
        <path d="M36 11v23L18 23z" fill="#3fc6f2" />
        <path d="M36 34H0l18-12z" fill="#2aaee8" />
      </Art>
    ),
    badge: <Badge className="top-[10px] left-[35px] bg-[#0078d4]">1</Badge>,
  },
  {
    label: 'To Do',
    art: (
      <Art>
        <path d="M0 17.500l6-6 13.500 13.500-6 7z" fill="#1b5abf" />
        <path d="M8 26L29.500 3.500 36 10 14 32.500z" fill="#42a4ec" />
      </Art>
    ),
  },
  {
    label: 'Edge',
    running: true,
    art: (
      <Art>
        <defs>
          <linearGradient id="edgeTop" x1="0" y1="0" x2="1" y2=".6">
            <stop offset="0" stopColor="#1c8fdc" />
            <stop offset=".5" stopColor="#2cc3cf" />
            <stop offset="1" stopColor="#6fe04c" />
          </linearGradient>
        </defs>
        <path d="M0 18C0 8 8 0 18 0s18 7 18 14.500c0 6-4.500 9.500-9.500 9.500-4 0-6.500-1.500-5.500-3.500 1-2 1.500-6-3-9C12 8 3 10 0 18z" fill="url(#edgeTop)" />
        <path d="M0 18c2-7.500 9-9.500 15-7.500-5 2-7 8-5 14s8 9 12 10.500C10 38 0 31 0 18z" fill="#1079cf" />
        <path d="M14 16c-4 9 5 15 20 10.500-4 8-12 10.500-19 8.500-7-5-6-15-1-19z" fill="#0d55a5" />
        <circle cx="9" cy="27" r="9" fill="#fafafa" />
        <circle cx="9" cy="24" r="2.800" fill="#8a8a8a" />
        <path d="M4.500 27.500h9c0 3.500-2 5-4.500 5s-4.500-1.500-4.500-5z" fill="#8a8a8a" />
      </Art>
    ),
  },
  {
    label: 'Sticky Notes',
    running: true,
    art: (
      <Art>
        <rect x="2" y="2" width="32" height="32" rx="1" fill="#3d3d3d" />
        <path d="M18 34l15-16v15a1 1 0 0 1-1 1z" fill="#2c2c2c" />
        <path d="M18 18h15L18 33z" fill="#ffd814" />
      </Art>
    ),
  },
  {
    label: 'Chrome guest',
    running: true,
    art: <Chrome />,
    badge: (
      <span className="absolute top-[11px] left-[36px] h-6 w-6 overflow-hidden rounded-full">
        <svg viewBox="0 0 24 24" className="h-6 w-6" aria-hidden>
          <rect width="24" height="24" fill="#a9aba5" />
          <path d="M0 0h24v9L0 13z" fill="#557a33" />
          <path d="M0 2l24-1v3L0 6z" fill="#a9c184" />
          <path d="M1 12q10-5 21 0v6l-9-2-11 3z" fill="#e3e6e2" />
          <path d="M9 15l4-3 5 7-4 2z" fill="#b39a94" />
          <path d="M9 3l4 2-3 4z" fill="#26351b" />
        </svg>
      </span>
    ),
  },
  {
    label: 'Crab',
    running: true,
    art: (
      <Art>
        <g stroke="#f7891b" strokeWidth="3.200" fill="none">
          <path d="M0 18.500h36M6 9.500l11 9-11 10M30 9.500l-11 9 11 10" />
        </g>
        <circle cx="14" cy="9.500" r="2.800" fill="#111" />
        <circle cx="21.500" cy="9.500" r="2.800" fill="#111" />
        <circle cx="14" cy="9.500" r=".8" fill="#fff" />
        <circle cx="21.500" cy="9.500" r=".8" fill="#fff" />
      </Art>
    ),
  },
  {
    label: 'Word',
    running: true,
    art: (
      <Art>
        <rect x="8" y="2" width="27" height="32" rx="1.500" fill="#123f86" />
        <path d="M8 18h27v8H8z" fill="#185abd" />
        <path d="M8 10h27v8H8z" fill="#2b7cd3" />
        <path d="M9.500 2h24A1.500 1.500 0 0 1 35 3.500V10H8V3.500A1.500 1.500 0 0 1 9.500 2z" fill="#41a5ee" />
        <rect x="0" y="9" width="18" height="18" rx="1.500" fill="#1b57b5" />
        <text x="9" y="22.500" textAnchor="middle" fill="#fff" fontSize="12" fontWeight="700" fontFamily="Open Sans, sans-serif">
          W
        </text>
      </Art>
    ),
  },
  {
    label: 'Settings',
    running: true,
    art: (
      <Art>
        <path d={gearPath(18, 18, 13.5)} transform="rotate(30 18 18)" fill="#7a828a" stroke="#7a828a" strokeWidth="1.500" strokeLinejoin="round" />
        <circle cx="18" cy="18" r="13.500" fill="#7a828a" />
        <circle cx="18" cy="18" r="7.500" fill="#0f67b5" stroke="#f2f2f2" strokeWidth="3" />
      </Art>
    ),
  },
  {
    label: 'Excel',
    running: true,
    art: (
      <Art>
        <rect x="8" y="2" width="27" height="32" rx="1.500" fill="#185c37" />
        <path d="M8 3.500A1.500 1.500 0 0 1 9.500 2H22v24H8z" fill="#21a366" />
        <path d="M22 2h11.500A1.500 1.500 0 0 1 35 3.500V10H22z" fill="#33c481" />
        <path d="M22 10h13v8H22z" fill="#21a366" />
        <path d="M8 18h27v8H8z" fill="#107c41" />
        <rect x="0" y="9" width="18" height="18" rx="1.500" fill="#127a40" />
        <text x="9" y="22.500" textAnchor="middle" fill="#fff" fontSize="13" fontWeight="700" fontFamily="Open Sans, sans-serif">
          X
        </text>
      </Art>
    ),
  },
  {
    label: 'Photos',
    running: true,
    art: (
      <Art>
        <defs>
          <linearGradient id="photo" x1="0" y1="0" x2="1" y2="1">
            <stop offset="0" stopColor="#1479d0" />
            <stop offset="1" stopColor="#8a58b5" />
          </linearGradient>
          <clipPath id="photoClip">
            <rect x="2" y="2" width="32" height="32" rx="4" />
          </clipPath>
        </defs>
        <g clipPath="url(#photoClip)">
          <rect x="2" y="2" width="32" height="32" fill="url(#photo)" />
          <path d="M10 34l11-13q3-4 6 0l10 10v6z" fill="#0c78d2" />
          <path d="M0 30l14-14.500q3-3 6 0l5 4.500L11 36H0z" fill="#3dc8f7" />
          <circle cx="25" cy="8" r="3" fill="#f4f4f4" />
        </g>
      </Art>
    ),
  },
  {
    label: 'MyASUS',
    running: true,
    art: (
      <Art>
        <defs>
          <linearGradient id="asus" x1="0" y1="1" x2="1" y2="0">
            <stop offset="0" stopColor="#6a10f5" />
            <stop offset="1" stopColor="#08a8ff" />
          </linearGradient>
        </defs>
        <rect width="36" height="36" fill="url(#asus)" />
        <path d="M4 26.500L12.500 9.500h4L8 26.500zM13 26.500l8.500-17h4L17 26.500z" fill="#f2f2ff" />
        <path d="M25 9.500h4.500v17h-3V13l-5 10.500h-3z" fill="#a9d3ff" />
        <circle cx="24.500" cy="25" r="2" fill="#fff" />
      </Art>
    ),
  },
];

function TaskBar() {
  return (
    <footer className="flex h-[72px] items-stretch border-t-2 border-[#b3bccb] bg-[linear-gradient(90deg,#e0edf5_0%,#e3eef7_18%,#d5e2fa_28%,#d8dbf5_40%,#d4e0fb_47%,#d9ddf1_58%,#d3dffa_65%,#dcdff0_76%,#e1ecf8_82%,#deebf6_100%)] text-[#1b1b1b]">
      <button aria-label="Weather" className="relative ml-3 w-[46px] shrink-0">
        <svg viewBox="0 0 44 48" className="absolute top-[12px] left-[2px] h-12 w-11" aria-hidden>
          <path d="M2 16q9 0 14-9l4 8-8 12q-7-3-10-11z" fill="#ef8f1f" />
          <path d="M9 38a8.500 8.500 0 0 1-1-16.500C9 16 13 14 17 14c5 0 8 2.500 9.500 6 6-.5 10.500 3.500 10.500 9 0 5-3.500 9-8.500 9z" fill="#9bb8ee" />
          <path d="M9 38a7 7 0 1 1 2.500-13.500c3 .5 5 2 8 2 4-1 7-4 11-3.500 4 1 6.500 3 6.500 7 0 4.500-3.500 8-8.500 8z" fill="#c9dbfb" />
        </svg>
        <span className="absolute top-2 left-[15px] rounded-full bg-white/80 px-[6px] text-[16px] leading-6">22°</span>
      </button>
      <nav className="ml-[14%] flex shrink-0">
        {taskIcons.map(({ label, running, art, badge }) => (
          <button
            key={label}
            aria-label={label}
            className="relative -mt-[2px] grid w-[66px] grid-rows-[1fr_36px_1fr] items-center justify-items-center"
          >
            <span className="row-start-2">{art}</span>
            {badge && <span className="absolute inset-0">{badge}</span>}
            {running && <span className="row-start-3 h-[5px] w-[9px] rounded-full bg-[#7c8290]" />}
          </button>
        ))}
      </nav>
      <div className="ml-auto flex shrink-0 items-center pr-[30px] text-[17px] leading-[23px]">
        <button aria-label="Show hidden icons" className="flex h-10 w-8 items-center justify-center">
          <Icon className="h-4 w-4" sw={2.500}>
            <path d="M2 17L12 7l10 10" />
          </Icon>
        </button>
        <button aria-label="OneDrive" className="ml-4 flex h-10 w-8 items-center justify-center">
          <svg viewBox="0 0 24 16" className="h-4 w-6" aria-hidden>
            <path d="M5.500 15.200a4.700 4.700 0 0 1-.7-9.300A7 7 0 0 1 17.500 4.500a5.500 5.500 0 0 1 1.500 10.700z" fill="#9a9a9a" />
            <path d="M2.500 13.500L13 8l9.500 5-3.500 2.200H5.500z" fill="#e6e6e6" />
            <path d="M5.500 15.200a4.700 4.700 0 0 1-.7-9.300A7 7 0 0 1 17.500 4.500a5.500 5.500 0 0 1 1.500 10.700z" fill="none" stroke="#1b1b1b" strokeWidth="1.200" />
          </svg>
        </button>
        <button className="ml-[21px] w-10 text-center">
          ENG
          <br />
          US
        </button>
        <button aria-label="Network, volume and battery" className="ml-[25px] flex items-center gap-3">
          <svg viewBox="0 0 24 18" className="h-[18px] w-6" fill="none" stroke="currentColor" strokeWidth="1.600" aria-hidden>
            <path d="M.7 6.700a16 16 0 0 1 22.600 0M4.200 9.800a11 11 0 0 1 15.600 0M7.600 13a6.200 6.200 0 0 1 8.800 0" />
            <circle cx="12" cy="15.800" r="1.800" fill="currentColor" stroke="none" />
          </svg>
          <svg viewBox="0 0 24 20" className="h-5 w-6" fill="none" stroke="currentColor" strokeWidth="1.400" strokeLinejoin="round" aria-hidden>
            <path d="M1 7h3.500L10 2v16l-5.500-5H1zM13 7q2 3 0 6M16 4.500q4 5.500 0 11" />
            <path d="M19 2q6 8 0 16" stroke="#a9b3be" />
          </svg>
          <svg viewBox="0 0 24 16" className="h-4 w-6" aria-hidden>
            <rect x=".8" y="1" width="20" height="14" rx="3" fill="none" stroke="currentColor" strokeWidth="1.600" />
            <rect x="3.500" y="4" width="10" height="8" rx="1" fill="currentColor" />
            <path d="M21.500 5.500h2.500v5h-2.500z" fill="currentColor" />
          </svg>
        </button>
        <button className="ml-[26px] text-right">
          12:45 am
          <br />
          08/27/2023
        </button>
        <button aria-label="Notifications" className="ml-3 flex h-6 w-6 items-center justify-center rounded-full bg-[#0078d4] text-[14px] text-white">
          4
        </button>
      </div>
    </footer>
  );
}

export default function App() {
  return (
    <div className="flex h-screen flex-col overflow-hidden bg-[#f7f7f7] font-['Open_Sans',sans-serif]">
      <TabStrip />
      <AddressBar />
      <div className="flex min-h-0 flex-1">
        <PdfViewer />
        <SideBar />
      </div>
      <TaskBar />
    </div>
  );
}
